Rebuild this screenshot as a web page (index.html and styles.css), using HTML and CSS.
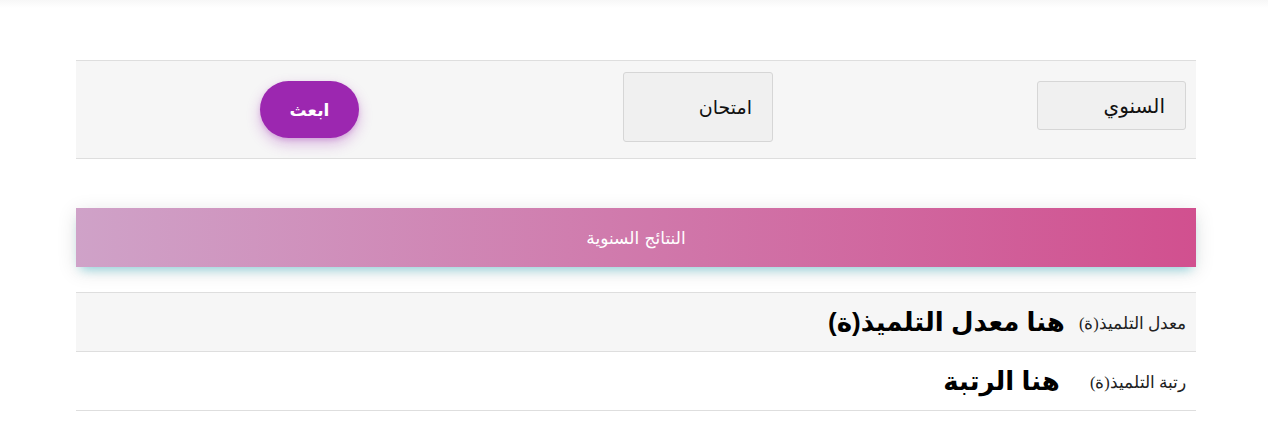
FILE: index.html
```html
<!DOCTYPE html>
<html lang="ar" dir="rtl">
<head>
    <meta charset="utf-8">
    <title>النتائج السنوية</title>
    <link rel="stylesheet" href="styles.css">
</head>
<body>
<div class="top-shade"></div>
<div class="page">
    <div class="filters">
        <div class="select-box">السنوي</div>
        <div class="exam-box">امتحان</div>
        <button class="send-button">ابعث</button>
    </div>

    <div class="results-header">النتائج السنوية</div>

    <div class="results">
        <div class="result-row striped">
            <span class="result-label">معدل التلميذ(ة)</span>
            <span class="result-value">هنا معدل التلميذ(ة)</span>
        </div>
        <div class="result-row">
            <span class="result-label">رتبة التلميذ(ة)</span>
            <span class="result-value rank">هنا الرتبة</span>
        </div>
    </div>
</div>
</body>
</html>
```

FILE: styles.css
```css
body {
    margin: 0;
    background-color: #fff;
    font-family: "DejaVu Sans", sans-serif;
    color: #222;
}

.top-shade {
    height: 8px;
    background: linear-gradient(#f7f7f7, #fff);
}

.page {
    padding: 52px 72px 30px 76px;
}

.filters {
    display: flex;
    align-items: center;
    gap: 264px;
    height: 97px;
    padding-right: 10px;
    background: #f6f6f6;
    border-top: 1px solid #dedede;
    border-bottom: 1px solid #dedede;
}

.select-box,
.exam-box {
    box-sizing: border-box;
    width: 149px;
    height: 49px;
    padding-right: 20px;
    display: flex;
    align-items: center;
    background: #f0f0f0;
    border: 1px solid #d6d6d6;
    border-radius: 3px;
    font-size: 20px;
    color: #111;
    margin-top: -8px;
}

.exam-box {
    width: 150px;
    height: 70px;
    margin-top: -6px;
    font-size: 19px;
}

.send-button {
    width: 99px;
    height: 57px;
    border: none;
    border-radius: 30px;
    background: #9c27b0;
    color: #fff;
    font-family: "DejaVu Sans", sans-serif;
    font-size: 17px;
    font-weight: bold;
    box-shadow: 0 6px 14px rgba(156, 39, 176, .3), 0 2px 4px rgba(156, 39, 176, .2);
    cursor: pointer;
}

.results-header {
    margin-top: 49px;
    height: 59px;
    display: flex;
    align-items: center;
    justify-content: center;
    background: linear-gradient(to left, #d1508f, #cfa2c8);
    color: #fff;
    font-size: 17px;
    box-shadow: 0 4px 20px rgba(0, 0, 0, .12), 0 7px 10px -5px rgba(0, 188, 212, .4);
}

.results {
    margin-top: 25px;
    border-bottom: 1px solid #dedede;
}

.result-row {
    height: 58px;
    display: flex;
    align-items: center;
    padding-right: 10px;
    border-top: 1px solid #dedede;
}

.result-row.striped {
    background: #f6f6f6;
}

.result-label {
    font-family: "Liberation Serif", "DejaVu Serif", serif;
    font-size: 16.5px;
    color: #222;
    margin-left: 14px;
    margin-top: 4px;
}

.result-value {
    font-family: "Liberation Sans", "DejaVu Sans", sans-serif;
    font-size: 26px;
    font-weight: bold;
    color: #000;
}

.result-value.rank {
    margin-right: 16px;
}
```
